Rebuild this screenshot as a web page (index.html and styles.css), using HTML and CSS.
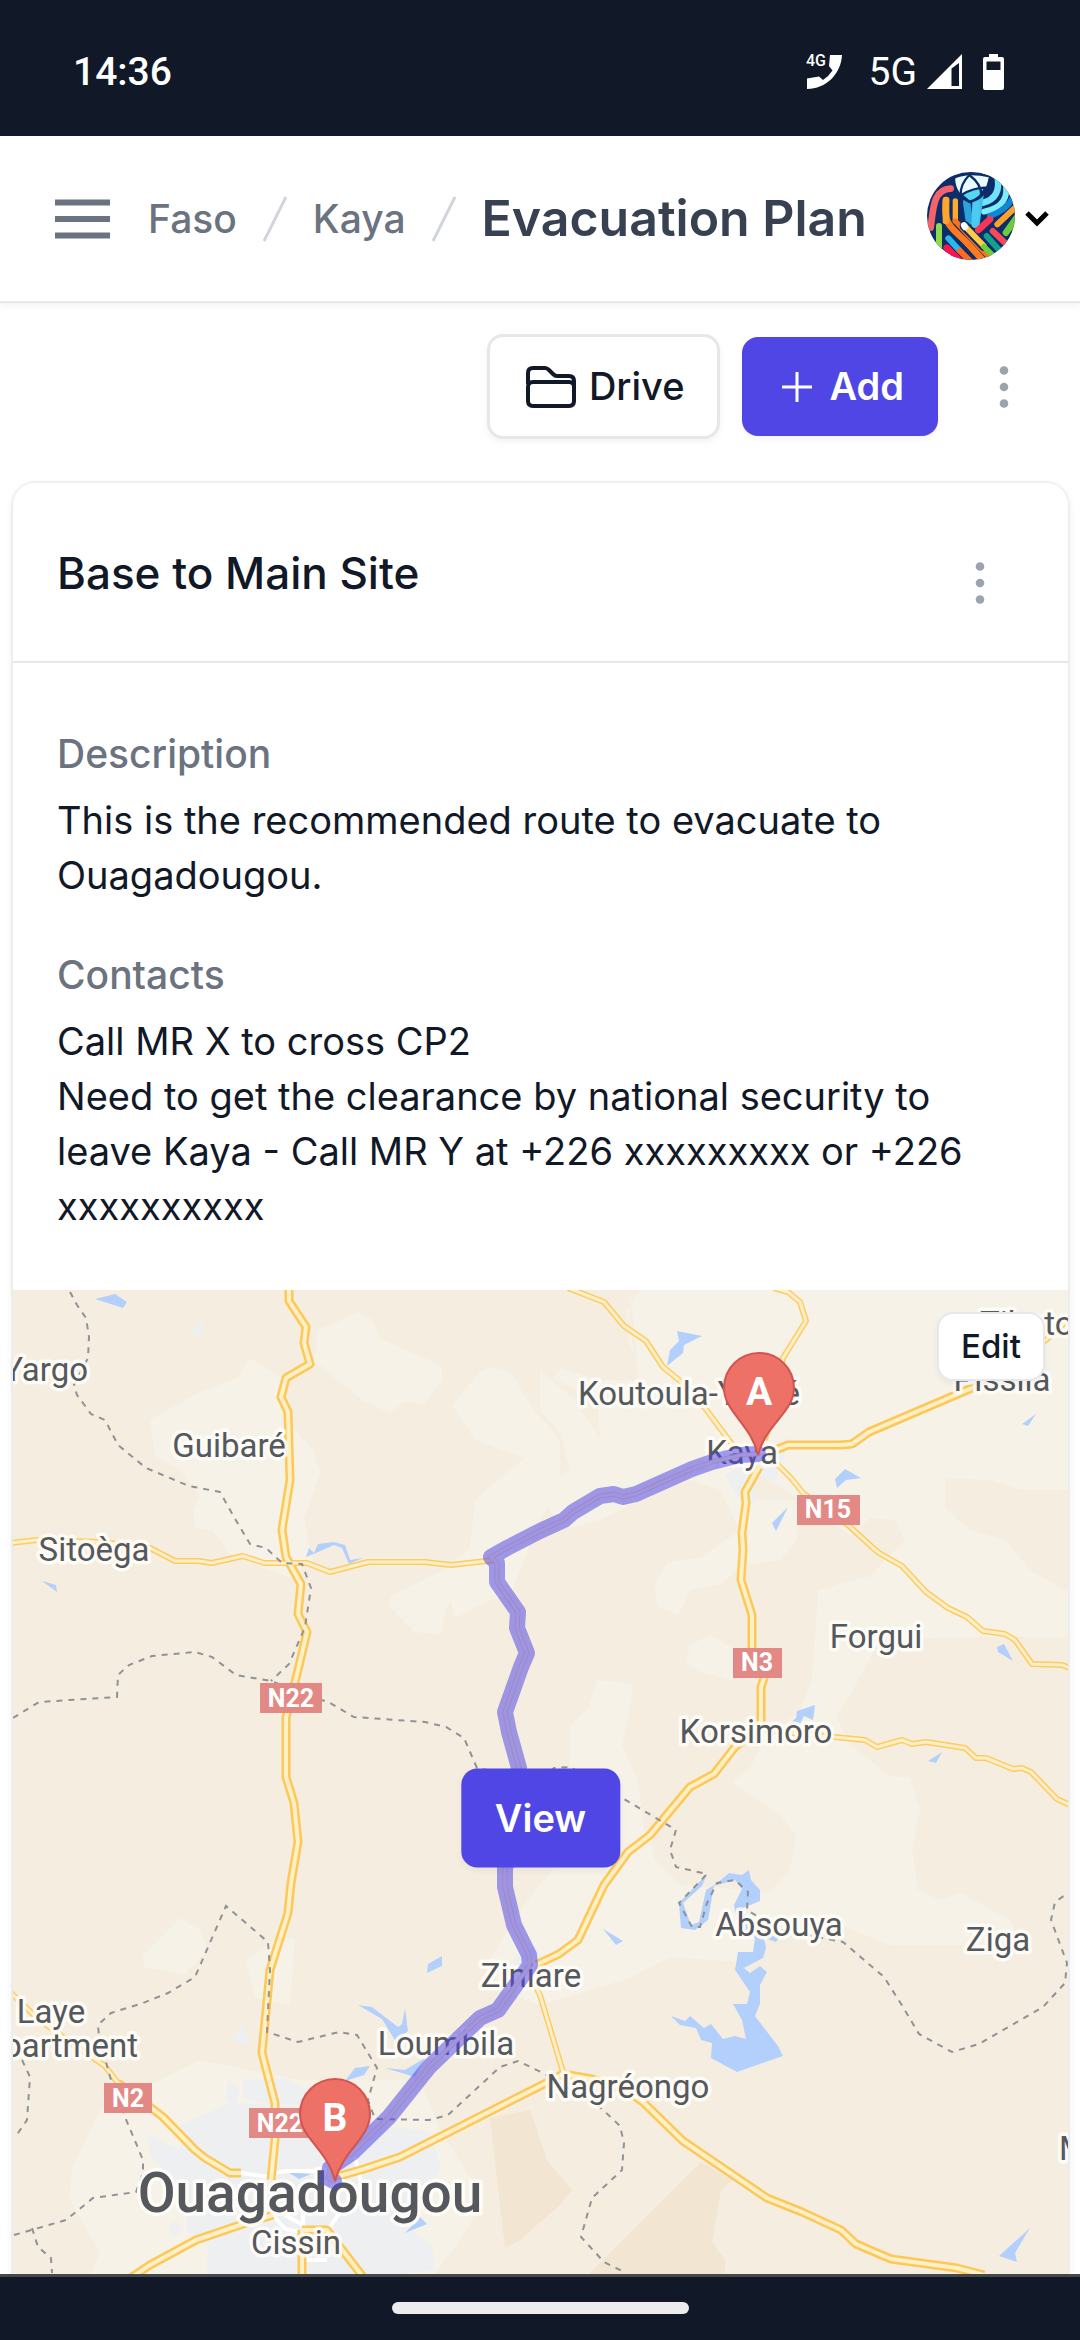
FILE: index.html
```html
<!DOCTYPE html>
<html lang="en">
<head>
<meta charset="utf-8">
<meta name="viewport" content="width=device-width, initial-scale=1">
<title>Evacuation Plan</title>
<link rel="stylesheet" href="styles.css">
</head>
<body>
<div class="status">
  <span class="status-time">14:36</span>
  <div class="status-icons">
    <svg class="icon-call" viewBox="0 0 36 36" width="36" height="36" aria-hidden="true">
      <text x="0" y="12" class="call-tag">4G</text>
      <path d="M24 1H36C35 20 20 35 1 35V24.500L13 22.500L17 26Q23 22 26.500 16.500L23 12Z" fill="#fff"/>
    </svg>
    <span class="status-net">5G</span>
    <svg class="icon-signal" viewBox="0 0 36 36" width="36" height="36" aria-hidden="true">
      <path fill="#fff" fill-rule="evenodd" d="M0 35L35 0V35ZM24.500 14.500V32H32V9Z"/>
    </svg>
    <svg class="icon-battery" viewBox="0 0 21 36" width="21" height="36" aria-hidden="true">
      <path fill="#fff" fill-rule="evenodd" d="M6 0H15V3H19Q21 3 21 5V34Q21 36 19 36H2Q0 36 0 34V5Q0 3 2 3H6ZM3.500 7.500V16H17.500V7.500Z"/>
    </svg>
  </div>
</div>

<header class="topbar">
  <button class="menu-btn" aria-label="Open menu">
    <svg viewBox="0 0 56 40" width="56" height="40"><path d="M0 3.500H55M0 20H55M0 36.500H55" stroke="#6b7280" stroke-width="6"/></svg>
  </button>
  <nav class="crumbs" aria-label="Breadcrumb">
    <a href="#">Faso</a>
    <svg viewBox="0 0 24 46" width="24" height="46" aria-hidden="true"><path d="M1 45L23 1" stroke="#d1d5db" stroke-width="3"/></svg>
    <a href="#">Kaya</a>
    <svg viewBox="0 0 24 46" width="24" height="46" aria-hidden="true"><path d="M1 45L23 1" stroke="#d1d5db" stroke-width="3"/></svg>
    <h1>Evacuation Plan</h1>
  </nav>
  <button class="profile" aria-label="Account">
    <svg class="avatar" viewBox="501 453 264 264" width="88" height="88">
      <rect x="501" y="453" width="264" height="264" fill="#0c2d69"/>
      <g fill="none" stroke-linecap="round">
        <path d="M670 545Q725 530 712 466" stroke="#6fe3f7" stroke-width="19"/>
        <path d="M672 572Q755 555 735 480" stroke="#7ceefa" stroke-width="18"/>
        <path d="M690 585Q755 560 765 510" stroke="#1286d6" stroke-width="18"/>
        <path d="M668 480L650 610" stroke="#3fc3ea" stroke-width="18"/>
        <path d="M620 545L628 600" stroke="#2aa5dc" stroke-width="22"/>
        <path d="M648 545L645 610" stroke="#4ccbee" stroke-width="22"/>
        <path d="M572 503C520 505 520 560 512 620" stroke="#f4626a" stroke-width="20"/>
        <path d="M537 615V690" stroke="#8ddb48" stroke-width="18"/>
        <path d="M558 537C548 620 580 620 625 670L680 730" stroke="#ff7a1f" stroke-width="20"/>
        <path d="M558 537V600" stroke="#ffa62e" stroke-width="20"/>
        <path d="M586 540V600" stroke="#ffab2f" stroke-width="16"/>
        <path d="M586 600L660 680L700 720" stroke="#f7731e" stroke-width="16"/>
        <path d="M565 652L600 690" stroke="#29b7ec" stroke-width="18"/>
        <path d="M600 690L640 730" stroke="#ff6a1c" stroke-width="18"/>
        <path d="M560 680L610 730" stroke="#fa1450" stroke-width="20"/>
        <path d="M614 615L672 675" stroke="#0c2d69" stroke-width="30"/>
        <path d="M614 615L672 675" stroke="#ffca45" stroke-width="17"/>
        <path d="M612 613L615 618" stroke="#fff" stroke-width="19"/>
        <path d="M672 677L700 705" stroke="#6bd03c" stroke-width="17"/>
        <path d="M690 595L655 627" stroke="#f93455" stroke-width="20"/>
        <path d="M680 645L720 690" stroke="#13a08d" stroke-width="18"/>
        <path d="M698 630L745 675" stroke="#fb4757" stroke-width="18"/>
        <path d="M765 560L712 610" stroke="#ffa02c" stroke-width="18"/>
        <path d="M770 590L738 635" stroke="#6ccb3b" stroke-width="20"/>
      </g>
      <g stroke="#0c2d69" stroke-width="7">
        <path d="M582 470Q620 450 690 466Q680 535 628 542Q582 520 582 470Z" fill="#e8fbff"/>
        <path d="M604 522Q640 500 676 500Q662 535 628 542Z" fill="#53d7f2"/>
        <path d="M628 462Q600 490 602 523M628 462Q665 490 664 523" fill="none"/>
      </g>
    </svg>
    <svg class="chevron" viewBox="0 0 24 16" width="24" height="16"><path d="M2 2L12 12L22 2" fill="none" stroke="#000" stroke-width="5"/></svg>
  </button>
</header>

<main class="page">
  <div class="toolbar">
    <button class="btn btn-outline">
      <svg viewBox="0 0 50 42" width="50" height="42" aria-hidden="true"><path d="M2 18V7Q2 2 7 2H19Q21 2 23 4L27 8Q29 10 31 10H43Q48 10 48 15V35Q48 40 43 40H7Q2 40 2 35V21Q2 16 7 16H43Q48 16 48 21" fill="none" stroke="#111827" stroke-width="4" stroke-linejoin="round"/></svg>
      Drive
    </button>
    <button class="btn btn-primary">
      <svg viewBox="0 0 32 32" width="32" height="32" aria-hidden="true"><path d="M1 16H31M16 1V31" stroke="#fff" stroke-width="3"/></svg>
      Add
    </button>
    <button class="more" aria-label="More options">
      <svg viewBox="0 0 10 42" width="10" height="42"><g fill="#9ca3af"><circle cx="5" cy="4.500" r="4.300"/><circle cx="5" cy="21" r="4.300"/><circle cx="5" cy="37.500" r="4.300"/></g></svg>
    </button>
  </div>

  <article class="card">
    <div class="card-head">
      <h2>Base to Main Site</h2>
      <button class="more" aria-label="Route options">
        <svg viewBox="0 0 10 42" width="10" height="42"><g fill="#9ca3af"><circle cx="5" cy="4.500" r="4.300"/><circle cx="5" cy="21" r="4.300"/><circle cx="5" cy="37.500" r="4.300"/></g></svg>
      </button>
    </div>
    <dl class="details">
      <dt>Description</dt>
      <dd>This is the recommended route to evacuate to Ouagadougou.</dd>
      <dt>Contacts</dt>
      <dd>Call MR X to cross CP2<br>Need to get the clearance by national security to leave Kaya - Call MR Y at +226 xxxxxxxxx or +226 xxxxxxxxxx</dd>
    </dl>
    <div class="map">
      <svg class="map-canvas" viewBox="13 1290 1055 1056" preserveAspectRatio="xMidYMin slice" role="img" aria-label="Route from Kaya to Ouagadougou">
        <rect x="13" y="1290" width="1055" height="1056" fill="#f5eee0"/>
        <g fill="#f6f2e7">
          <path d="M150 1420L200 1392L238 1378L250 1358L281 1378L290 1425L312 1448L321 1472L304 1518L312 1560L290 1578L230 1554L212 1530L195 1528L193 1512L200 1496L180 1470L155 1456Z"/>
          <path d="M314 1360L318 1330L359 1312L372 1320L380 1338L410 1352L440 1365L443 1380L424 1404L404 1402L390 1413L362 1400L330 1374Z"/>
          <path d="M452 1405L480 1372L490 1367L510 1372L535 1412L560 1440V1484L540 1520L520 1570L512 1592L480 1605L455 1618L450 1598L440 1635L415 1632L388 1605L392 1595L440 1572L470 1548L475 1500L500 1478L525 1458L475 1440Z"/>
          <path d="M630 1290L628 1340L640 1365L700 1410L740 1445L745 1500L797 1500V1540L780 1560L740 1566L720 1585L690 1590L678 1615L657 1606L655 1582L668 1562L700 1558L740 1530L720 1490L690 1480L640 1500L600 1520L560 1530L540 1490L570 1470L560 1432L540 1410V1370L575 1400L600 1440L598 1400L553 1378L560 1368L600 1380L640 1380L626 1310L640 1290H1068V1490H1020L990 1480L945 1478V1508L970 1530L1005 1540L1030 1570L1068 1592V1637H960L880 1640L850 1695L836 1716L850 1745L890 1776L910 1778L920 1810L912 1850L918 1890L940 1900L960 1893L1010 1920L1020 1945H890L840 1925L790 1920L740 1962L670 1957L630 1978L540 2005L500 1990L490 1960L520 1910L560 1860L650 1840L655 1860L680 1885L770 1892L790 1870L796 1835L780 1815L732 1782L750 1768L764 1740L800 1710L812 1680L815 1640L818 1590L870 1576L905 1540L895 1520L870 1518L850 1535L770 1480L640 1390Z"/>
          <path d="M597 1680L633 1684L630 1710L622 1745L638 1780L645 1840L600 1850L570 1800L570 1725L588 1708ZM690 1645L710 1635L733 1648V1681L700 1672L686 1662Z"/>
          <path d="M143 1955L180 1918L200 1930L208 1950L185 1974L145 1968ZM246 1960L282 1935L295 1940L290 2005L255 1998Z"/>
          <path d="M72 2168L100 2110L150 2085L200 2060L300 2080L420 2080L440 2130L484 2200L460 2240L380 2346H60L100 2252L70 2200Z"/>
        </g>
        <g fill="#f2e5d1">
          <path d="M490 2118L530 2110L547 2160L572 2190L560 2205L520 2240L505 2248Z"/>
          <path d="M701 2162L732 2180L721 2190L712 2242L725 2260V2346H560L590 2273Z"/>
        </g>
        <g fill="#edeff1">
          <path d="M180 2125L230 2103L280 2105L345 2120L380 2125L430 2132L441 2168L420 2200L400 2222L432 2245L435 2270L400 2274L240 2346L206 2290L208 2246L186 2230V2198L150 2155L148 2135L180 2150Z"/>
          <path d="M243 2080L285 2078L307 2090L300 2105L262 2102L243 2098ZM232 2042L242 2022L250 2045ZM168 2228L176 2220L182 2230L174 2238ZM228 2080L240 2090L236 2104L226 2100Z"/>
          <path d="M725 1475L790 1437L782 1460L775 1482L755 1475L755 1506L740 1500ZM191 1332L204 1320V1332L195 1336Z"/>
          <path d="M512 1960L535 1945L545 1965L520 1975Z"/>
        </g>
        <g fill="#b3d0fc">
          <path d="M95 1299L115 1294L127 1302L123 1308ZM42 1581L56 1585L57 1592Z"/>
          <path d="M677 1331L702 1336L684 1345L683 1353L667 1366L670 1350L679 1341Z"/>
          <path d="M835 1479L845 1469L861 1478L846 1480L837 1488ZM772 1523L788 1507L776 1531ZM1022 1424L1036 1414L1028 1426ZM997 1647L1004 1644L1013 1661L998 1652Z"/>
          <path d="M306 1557L309 1548L314 1553L318 1544L334 1542L345 1545L350 1560L363 1558L349 1564L342 1548L334 1545L316 1553Z"/>
          <path d="M796 1718L797 1711L815 1705L813 1720L804 1716L800 1724L787 1726ZM928 1761L942 1752L936 1763ZM603 1929L623 1941L616 1945ZM427 1973L428 1964L442 1956V1966Z"/>
          <path d="M707 1874L679 1903L681 1928L695 1930L708 1920L714 1886L735 1880L742 1889L734 1905L738 1925L755 1938L753 1952H738L735 1970L750 1992L747 2004H733L742 2020L746 2039L735 2036L723 2039L711 2024L704 2028L690 2016L685 2021L671 2016L680 2025L696 2028L701 2040L712 2043L711 2058L737 2072L783 2056L778 2046L755 2016L760 2004V1985L767 1972L760 1966L750 1973L744 1968L763 1958L766 1948L764 1938L776 1942L780 1936L752 1930L743 1908L760 1901V1890L751 1880L749 1870L742 1875L729 1873L716 1884L706 1890L699 1922L691 1925L683 1903L702 1886Z"/>
          <path d="M358 2005L372 2007L398 2027L402 2024L405 2008L408 2031L396 2042L382 2019ZM385 2068L405 2070L425 2058L415 2077ZM345 2081L355 2068L370 2066L364 2075ZM288 2172L311 2174L299 2179ZM405 2233L420 2217L427 2224ZM999 2256L1030 2228L1015 2253L1017 2262Z"/>
        </g>
        <path class="road-white" d="M241 2173L268 2177M268 2180L275 2173L286 2171H318M355 2157L361 2182M273 2215L285 2229L300 2232M285 2215L303 2225V2200M302 2260H327M340 2212L328 2230"/>
        <defs>
          <path id="trunk" d="M289 1285V1301L306 1327L304 1343L310 1364L286 1378L281 1397L288 1412L290 1480L282 1530L286 1557L301 1584L298 1614L307 1632L298 1670L286 1718V1777L294 1803L298 1842L291 1883L288 1913L270 1970L262 2053L275 2103V2140L271 2180M756 1458L778 1449L788 1445H840L852 1444L869 1432L972 1388M759 1467L745 1492L746 1503L742 1533L743 1550L741 1580L752 1615V1648L764 1678L761 1687V1722L753 1733L735 1747L714 1774L690 1787L650 1835L628 1852L604 1885L578 1940L559 1954L540 1963L518 1975M336 2177L364 2169L400 2157L546 2083L563 2074L592 2079L626 2090L643 2102L683 2141L767 2198L802 2212L841 2230L856 2244L891 2259L957 2268L984 2275M118 2083L154 2110L163 2117L195 2150L205 2158L230 2173H241M273 2215L246 2223L196 2240L150 2265L120 2285M302 2230V2290M302 2230H327L370 2286"/>
          <path id="minor" d="M10 1543L37 1540L100 1542L150 1548L175 1561H198L212 1563L243 1556L264 1563H307L330 1572L368 1562H425L451 1565L495 1560M568 1288L604 1302L624 1326L646 1341L663 1367L679 1380L705 1408L740 1455M774 1288L788 1292L800 1302L806 1321L783 1358L765 1440M972 1388L1046 1340L1070 1318M764 1455L778 1465L791 1478L803 1493L848 1525L872 1547L879 1553L902 1566L926 1592L948 1608L967 1617L983 1631L1005 1634L1015 1640L1032 1664L1062 1665L1070 1668M764 1730L834 1737L865 1740L877 1747L902 1740L912 1744L926 1742L965 1748L976 1758H986L1013 1769L1022 1768L1031 1772L1057 1799L1070 1805M530 1975L540 1995L563 2072M10 1992L36 2017L71 2043L105 2066L118 2083"/>
          <path id="route" d="M758 1454L740 1455L712 1462L692 1469L636 1494L623 1497L614 1494L600 1496L573 1512L564 1520L540 1531L507 1548L491 1557L497 1563V1582L518 1612L517 1628L527 1653L521 1667L505 1712L509 1732L519 1768L520 1820L505 1868V1887L514 1925L529 1955L530 1965L498 2010L480 2018L429 2067L389 2117L352 2153L330 2168L328 2178L334 2181"/>
        </defs>
        <use href="#minor" class="minor-edge"/><use href="#trunk" class="trunk-edge"/>
        <use href="#minor" class="minor-fill"/><use href="#trunk" class="trunk-fill"/>
        <g class="bounds">
          <path d="M70 1292L77 1305L86 1318L89 1337L88 1358L74 1385L77 1395L91 1414L105 1420L118 1445L146 1468L189 1486L220 1492L234 1517L250 1544L266 1548L282 1563L302 1564L311 1588L305 1627L289 1664L271 1681"/>
          <path d="M13 1718L39 1702L117 1697L118 1675L129 1665L152 1656L195 1652L212 1657L236 1675L271 1681L330 1703L354 1717L425 1722L446 1727L464 1738L477 1768L540 1780L554 1768L570 1767L619 1796L676 1830L670 1850L676 1867L707 1874L679 1903L692 1927H700L707 1903L717 1883L735 1880L748 1892L747 1910L780 1930L843 1942L884 1977L903 2007L919 2034L952 2052L979 2044L1043 2007L1065 1983L1067 1963L1051 1920L1055 1902L1068 1893"/>
          <path d="M14 2235L66 2220L93 2198L136 2192L143 2173V2160L125 2117L111 2080L99 2037L98 2025L111 2013L143 2003L168 1993L195 1977L226 1906L268 1942L270 1970L267 2032L298 2042L339 2032L357 2035L377 2068L368 2100L375 2119L429 2120L448 2115L500 2067L518 2061L545 2074L601 2108L620 2126L624 2143L622 2170L592 2198L581 2237L604 2262L626 2273M32 2228L38 2247L51 2258L52 2273M22 2060L30 2077L27 2120L16 2136"/>
        </g>
        <g class="shield">
          <rect x="797" y="1495" width="63" height="30"/><text x="828" y="1518">N15</text>
          <rect x="733" y="1648" width="49" height="30"/><text x="757" y="1671">N3</text>
          <rect x="260" y="1683" width="62" height="30"/><text x="291" y="1707">N22</text>
          <rect x="104" y="2083" width="48" height="30"/><text x="128" y="2107">N2</text>
          <rect x="249" y="2108" width="62" height="30"/><text x="280" y="2132">N22</text>
        </g>
        <g class="place">
          <text class="to-left" x="88" y="1381">Yargo</text>
          <text x="229" y="1457">Guibaré</text>
          <text x="94" y="1561">Sitoèga</text>
          <text x="689" y="1405">Koutoula-Yarcé</text>
          <text x="742" y="1464">Kaya</text>
          <text class="to-right" x="980" y="1335">Tibato</text>
          <text x="1002" y="1391">Pissila</text>
          <text x="876" y="1648">Forgui</text>
          <text x="756" y="1743">Korsimoro</text>
          <text x="779" y="1936">Absouya</text>
          <text x="998" y="1951">Ziga</text>
          <text x="531" y="1987">Ziniare</text>
          <text x="51" y="2023">Laye</text>
          <text class="to-left" x="138" y="2057">Department</text>
          <text x="446" y="2055">Loumbila</text>
          <text x="628" y="2098">Nagréongo</text>
          <text class="to-right" x="1059" y="2160">M</text>
          <text class="city" x="310" y="2212">Ouagadougou</text>
          <text x="296" y="2254">Cissin</text>
        </g>
        <use href="#route" class="route"/>
        <use href="#route" class="route-line"/>
        <use href="#route" class="route-core"/>
        <g class="pin">
          <path d="M758 1455C751 1424 724 1412 724 1388A35 35 0 0 1 794 1388C794 1412 766 1424 758 1455Z"/><text x="759" y="1405">A</text>
          <path d="M335 2181C328 2150 300 2138 300 2114A35 35 0 0 1 370 2114C370 2138 343 2150 335 2181Z"/><text x="335" y="2131">B</text>
        </g>
      </svg>
      <button class="btn btn-edit">Edit</button>
      <button class="btn btn-primary btn-view">View</button>
    </div>
  </article>
</main>
<footer class="gesture"><span class="gesture-pill"></span></footer>
</body>
</html>
```
FILE: styles.css
```css
* { box-sizing: border-box; }

body {
  margin: 0;
  height: 100vh;
  display: flex;
  flex-direction: column;
  overflow: hidden;
  background: #fff;
  color: #111827;
  font-family: Inter, "Liberation Sans", sans-serif;
  font-size: 38px;
  line-height: 55px;
}

h1, h2, dl, dd { margin: 0; }
svg { display: block; flex: none; }
a { color: inherit; text-decoration: none; }

button {
  display: flex;
  align-items: center;
  padding: 0;
  border: 0;
  background: none;
  color: inherit;
  font: inherit;
  cursor: pointer;
}

/* System status bar */
.status {
  flex: none;
  display: flex;
  justify-content: space-between;
  align-items: center;
  height: 136px;
  padding: 8px 76px 0 73px;
  background: #111827;
  color: #fff;
  font-family: Roboto, "Noto Sans", sans-serif;
  font-size: 39px;
}
.status-time { font-weight: 500; }
.status-icons { display: flex; align-items: center; }
.status-net { margin: 0 10px 0 27px; }
.icon-call { overflow: visible; }
.icon-battery { margin-left: 20px; }
.call-tag { font: 500 16px Roboto, sans-serif; fill: #fff; }

/* Header */
.topbar {
  position: relative;
  flex: none;
  display: flex;
  align-items: center;
  height: 167px;
  padding: 0 31px 0 55px;
  border-bottom: 2px solid #e5e7eb;
  box-shadow: 0 3px 6px rgba(0, 0, 0, .05);
}
.crumbs {
  flex: 1;
  display: flex;
  align-items: center;
  gap: 26px;
  margin-left: 37px;
  color: #6b7280;
  font-size: 39px;
  font-weight: 500;
}
.crumbs h1 {
  font-size: 50px;
  font-weight: 600;
  color: #374151;
  white-space: nowrap;
}
.profile { gap: 10px; }
.avatar { border-radius: 50%; margin-bottom: 6px; }

/* Toolbar */
.page { flex: 1; min-height: 0; overflow: hidden; }
.toolbar {
  display: flex;
  justify-content: flex-end;
  align-items: center;
  gap: 22px;
  padding: 31px 71px 44px;
}
.toolbar .more { margin-left: 39px; }
.btn {
  justify-content: center;
  border-radius: 16px;
  font-weight: 500;
  box-shadow: 0 3px 6px rgba(0, 0, 0, .05);
}
.btn-outline {
  height: 105px;
  gap: 13px;
  padding: 0 32px 0 36px;
  border: 3px solid #e5e7eb;
}
.btn-primary {
  height: 99px;
  gap: 17px;
  padding: 0 34px 0 39px;
  background: #4f46e5;
  color: #fff;
  font-weight: 600;
}
.more { justify-content: center; width: 10px; }

/* Route card */
.card {
  margin: 0 12px 0 13px;
  padding-top: 2px;
  border-radius: 22px;
  overflow: hidden;
  box-shadow: 0 0 0 2px rgba(0, 0, 0, .04), 0 3px 10px rgba(0, 0, 0, .08);
}
.card-head {
  display: flex;
  justify-content: space-between;
  align-items: center;
  height: 178px;
  padding: 20px 83px 0 44px;
  border-bottom: 2px solid #e5e7eb;
}
.card-head h2 { margin-bottom: 20px; font-size: 44px; font-weight: 500; }
.details { padding: 63px 44px 56px; }
.details dt { padding-bottom: 12px; color: #6b7280; font-size: 39px; font-weight: 500; }
.details dd + dt { padding-top: 44px; }

/* Map */
.map { position: relative; aspect-ratio: 1; background: #f5eee0; }
.map-canvas { width: 100%; height: 100%; }
.btn-edit {
  position: absolute;
  top: 22px;
  right: 23px;
  width: 108px;
  height: 69px;
  border: 2px solid #e5e7eb;
  background: #fff;
  font-size: 33px;
}
.btn-view {
  position: absolute;
  top: 50%;
  left: 50%;
  padding: 0 34px;
  transform: translate(-50%, -50%);
}
.bounds { fill: none; stroke: #8f9296; stroke-width: 2; stroke-dasharray: 6 6; }
.road-white { fill: none; stroke: #fff; stroke-width: 4; }
.minor-edge, .minor-fill, .trunk-edge, .trunk-fill { fill: none; stroke-linejoin: round; }
.minor-edge { stroke: #fccb64; stroke-width: 6; }
.minor-fill { stroke: #ffefc6; stroke-width: 3; }
.trunk-edge { stroke: #fcc858; stroke-width: 9; }
.trunk-fill { stroke: #ffefc6; stroke-width: 4; }
.shield rect { fill: #e28986; }
.shield text { font: 700 25px Roboto, sans-serif; fill: #fff; text-anchor: middle; }
.place text {
  font: 400 33px Roboto, "Noto Sans", sans-serif;
  fill: #55585c;
  stroke: #fffdf8;
  stroke-opacity: .9;
  stroke-width: 7;
  stroke-linejoin: round;
  paint-order: stroke;
  text-anchor: middle;
}
.place .to-left { text-anchor: end; }
.place .to-right { text-anchor: start; }
.place .city { font-size: 55px; font-weight: 500; }
.route, .route-line, .route-core {
  fill: none;
  stroke-linecap: round;
  stroke-linejoin: round;
}
.route { stroke: #5046e5; stroke-opacity: .53; stroke-width: 16; }
.route-line { stroke: #9c86c0; stroke-opacity: .8; stroke-width: 5; }
.route-core { stroke: #a195e0; stroke-width: 3; }
.pin path { fill: #ee7168; stroke: #d3544f; stroke-width: 2; }
.pin text { font: 700 39px Roboto, sans-serif; fill: #fff; text-anchor: middle; }

/* System gesture bar */
.gesture {
  flex: none;
  display: flex;
  justify-content: center;
  align-items: center;
  height: 66px;
  padding-bottom: 2px;
  border-top: 3px solid #45484a;
  background: #111827;
}
.gesture-pill { width: 297px; height: 12px; border-radius: 6px; background: #ececec; }
```
